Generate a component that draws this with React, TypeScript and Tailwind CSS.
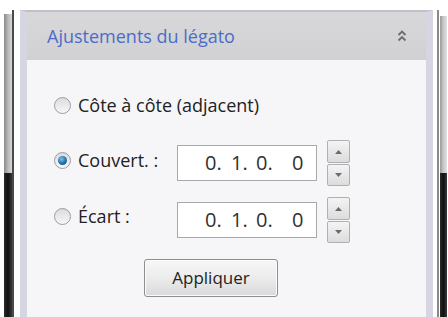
import React from "react";

function Radio({ checked }: { checked?: boolean }) {
  return (
    <div className="w-[17px] h-[17px] rounded-full border border-[#9c9ca0] bg-gradient-to-b from-[#dcdcdc] to-[#f7f7f7] flex items-center justify-center shrink-0">
      {checked ? (
        <div className="w-[9px] h-[9px] rounded-full bg-[radial-gradient(circle_at_40%_35%,#7fc4ea,#1f6fa8_55%,#0f3f66)]" />
      ) : null}
    </div>
  );
}

function Spinner() {
  return (
    <div className="flex flex-col gap-[1px] ml-[10px]">
      <div className="w-[23px] h-[23px] border border-[#b0b0b4] rounded-[2px] bg-gradient-to-b from-[#f4f4f4] to-[#dcdcdc] flex items-center justify-center">
        <svg width="7" height="4" viewBox="0 0 7 4"><path d="M0 4 L3.5 0 L7 4 Z" fill="#6a6a72" /></svg>
      </div>
      <div className="w-[23px] h-[22px] border border-[#b0b0b4] rounded-[2px] bg-gradient-to-b from-[#f4f4f4] to-[#dcdcdc] flex items-center justify-center">
        <svg width="7" height="4" viewBox="0 0 7 4"><path d="M0 0 L3.5 4 L7 0 Z" fill="#6a6a72" /></svg>
      </div>
    </div>
  );
}

function Field() {
  return (
    <div className="w-[140px] h-[36px] border border-[#a9a9ad] bg-white flex items-center pl-[27px] text-[20px] text-[#303030] leading-none">
      <span className="w-[26px]">0.</span>
      <span className="w-[25px]">1.</span>
      <span className="w-[36px]">0.</span>
      <span>0</span>
    </div>
  );
}

export default function App() {
  return (
    <div
      className="w-[448px] h-[317px] bg-white flex overflow-hidden"
      style={{ fontFamily: '"Open Sans", "Noto Sans", sans-serif' }}
    >
      {/* left frame strip */}
      <div className="w-[20px] flex pt-[14px]">
        <div className="ml-[4px] w-[8px] flex flex-col">
          <div className="h-[159px] bg-gradient-to-r from-[#8a8a8a] via-[#b8b8b8] to-[#d8d8d8]" />
          <div className="flex-1 bg-gradient-to-r from-[#2a2a2a] via-[#111] to-[#3a3a3a]" />
        </div>
        <div className="w-[2px] bg-[#4a4a4a] -mt-[4px]" />
      </div>

      {/* panel */}
      <div className="w-[413px] mt-[10px] border-x-[7px] border-x-[#d6d6e2] border-t-[2px] border-t-[#c0c0cc] bg-[#f6f6f8] flex flex-col">
        <div className="h-[48px] bg-gradient-to-b from-[#d8d8db] to-[#d1d1d4] flex items-center justify-between pl-[20px] pr-[19px]">
          <span className="text-[18px] text-[#4b6cc9]">Ajustements du légato</span>
          <svg width="10" height="14" viewBox="0 0 10 14">
            <path d="M1.5 6 L5 2.5 L8.5 6" stroke="#6b6b70" strokeWidth="1.8" fill="none" />
            <path d="M1.5 11.5 L5 8 L8.5 11.5" stroke="#6b6b70" strokeWidth="1.8" fill="none" />
          </svg>
        </div>

        <div className="flex flex-col pl-[27px] pt-[33px] text-[18px] text-[#222]">
          <div className="h-[24px] flex items-center gap-[7px]">
            <Radio />
            <span>Côte à côte (adjacent)</span>
          </div>

          <div className="h-[46px] mt-[23px] flex items-center">
            <div className="w-[123px] flex items-center gap-[7px] -mt-[5px]">
              <Radio checked />
              <span>Couvert. :</span>
            </div>
            <Field />
            <Spinner />
          </div>

          <div className="h-[46px] mt-[11px] flex items-center">
            <div className="w-[123px] flex items-center gap-[7px] -mt-[7px]">
              <Radio />
              <span>Écart :</span>
            </div>
            <Field />
            <Spinner />
          </div>

          <div className="mt-[16px] ml-[90px]">
            <button className="w-[134px] h-[38px] rounded-[3px] border border-[#8e8e92] bg-gradient-to-b from-[#f7f7f7] via-[#ececec] to-[#d9d9d9] text-[17px] text-[#222] shadow-[inset_0_0_0_1px_#fbfbfb]">
              Appliquer
            </button>
          </div>
        </div>
      </div>

      {/* right frame strip */}
      <div className="flex-1 flex pt-[10px] pl-[4px]">
        <div className="w-[2px] bg-[#8a8a8a]" />
        <div className="ml-[1px] w-[7px] flex flex-col pt-[6px]">
          <div className="h-[157px] bg-gradient-to-r from-[#9a9a9a] via-[#c8c8c8] to-[#e0e0e0]" />
          <div className="flex-1 bg-gradient-to-r from-[#2a2a2a] via-[#111] to-[#3a3a3a]" />
        </div>
      </div>
    </div>
  );
}
